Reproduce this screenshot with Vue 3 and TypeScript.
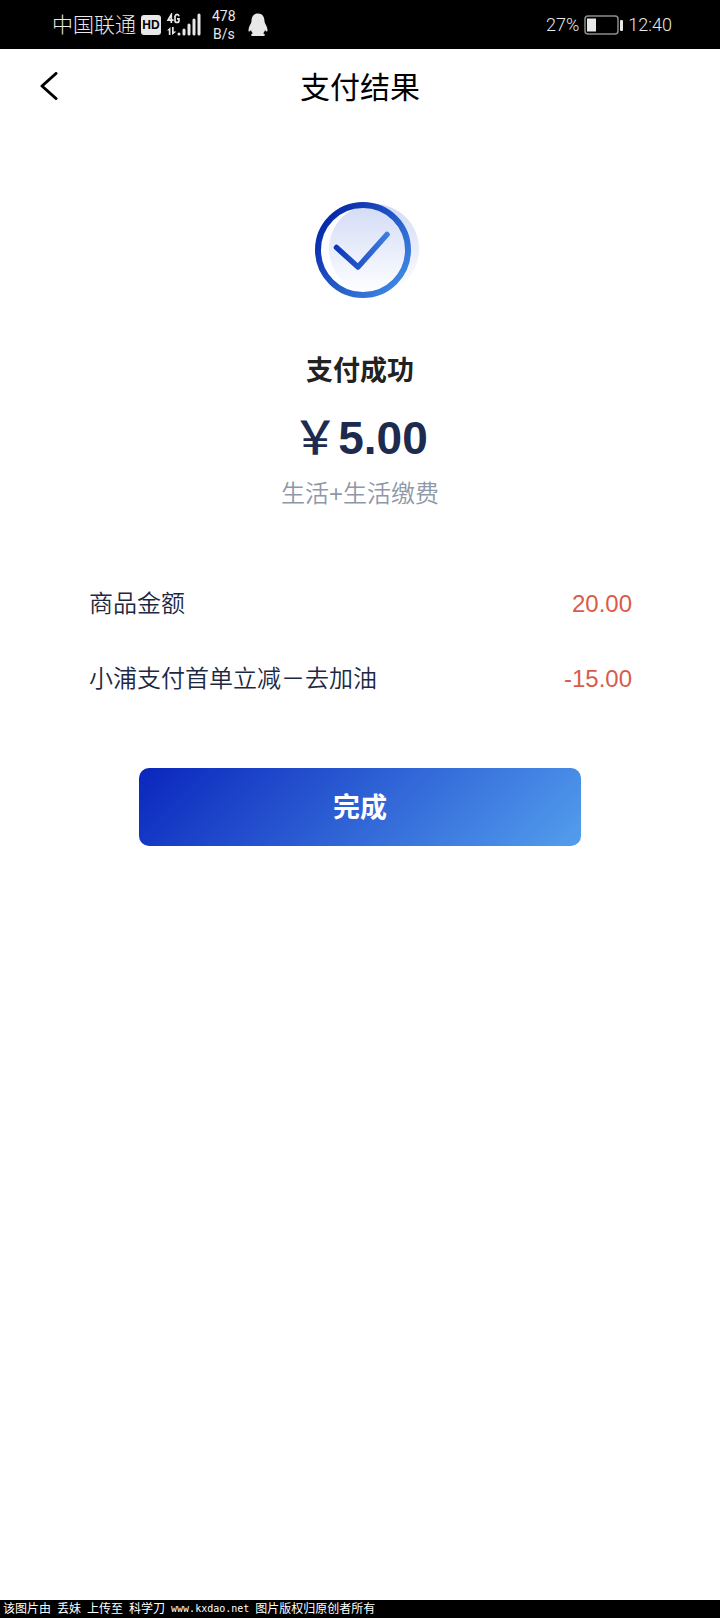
<script setup lang="ts">
interface PaymentLine {
  label: string
  value: string
}

const lines: PaymentLine[] = [
  { label: '商品金额', value: '20.00' },
  { label: '小浦支付首单立减－去加油', value: '-15.00' },
]
</script>

<template>
  <div class="screen">
    <div class="status">
      <div class="status-group">
        <span class="carrier">中国联通</span>
        <span class="hd">HD</span>
        <svg class="signal" width="34" height="24" viewBox="0 0 34 24" aria-hidden="true">
          <g fill="none" stroke="#e8e8e8" stroke-width="1.7">
            <path d="M4.3 10V1.5L1 7.2h5.6" />
            <path d="M12 3.2Q11.500 1.300 10 1.300T8 3.500v4Q8 9.500 10 9.500T12 7.500V5.800H10" />
          </g>
          <path d="M0 17.500l3.500-3.500v8H1.800v-4.500zM5 14h1.700v4.500H9.500L5 22z" fill="#e8e8e8" />
          <g stroke="#e8e8e8" stroke-width="3" stroke-linecap="round">
            <path d="M12 21v0M17 17v4M22 12v9M27 7V21M32 2v19" />
          </g>
        </svg>
        <span class="speed"><span>478</span><span>B/s</span></span>
        <svg class="penguin" width="20" height="24" viewBox="0 0 20 24" aria-hidden="true">
          <path
            d="M10 0.500C5.500 0.500 3.500 4 3.500 8.500C3.300 10.500 0.500 13.500 0.500 17C0.500 19 1.500 19 3 17C3.300 18.500 4 19.500 5 20.300C3 21 2.500 22.500 4 23H16C17.500 22.500 17 21 15 20.300C16 19.500 16.700 18.500 17 17C18.500 19 19.500 19 19.500 17C19.500 13.500 16.700 10.500 16.500 8.500C16.500 4 14.500 0.500 10 0.500Z"
            fill="#e8e8e8"
          />
        </svg>
      </div>
      <div class="status-group">
        <span class="battery-text">27%</span>
        <svg class="battery" width="39" height="20" viewBox="0 0 39 20" aria-hidden="true">
          <rect x="1" y="1" width="33" height="18" rx="3" fill="none" stroke="#8c8c8c" stroke-width="1.500" />
          <rect x="3" y="3.500" width="9" height="13" fill="#e8e8e8" />
          <rect x="36" y="5" width="3" height="11" rx="1" fill="#e8e8e8" />
        </svg>
        <span class="clock">12:40</span>
      </div>
    </div>

    <header class="header">
      <button class="back" type="button" aria-label="返回">
        <svg width="18" height="28" viewBox="0 0 18 28" aria-hidden="true">
          <path d="M16 1.500L2 14L16 26.500" fill="none" stroke="#000" stroke-width="3" stroke-linecap="round" stroke-linejoin="round" />
        </svg>
      </button>
      <h1 class="title">支付结果</h1>
    </header>

    <main class="content">
      <svg class="success-icon" width="118" height="98" viewBox="0 0 118 98" aria-hidden="true">
        <defs>
          <linearGradient id="ring" x1="15" y1="25" x2="92" y2="90" gradientUnits="userSpaceOnUse">
            <stop offset="0" stop-color="#0526a8" />
            <stop offset="1" stop-color="#3e86e2" />
          </linearGradient>
          <linearGradient id="tick" x1="34" y1="50" x2="88" y2="50" gradientUnits="userSpaceOnUse">
            <stop offset="0" stop-color="#0c35b5" />
            <stop offset="1" stop-color="#407fe2" />
          </linearGradient>
          <linearGradient id="disc" x1="0" y1="0" x2="0" y2="1">
            <stop offset="0" stop-color="#d2dbf6" />
            <stop offset="1" stop-color="#ffffff" />
          </linearGradient>
        </defs>
        <circle cx="73" cy="48" r="45" fill="url(#disc)" />
        <circle cx="62" cy="49" r="45" fill="none" stroke="url(#ring)" stroke-width="6" />
        <path d="M35.500 46.500L57 66L86 33.500" fill="none" stroke="url(#tick)" stroke-width="5.500" stroke-linecap="round" stroke-linejoin="round" />
      </svg>
      <h2 class="result">支付成功</h2>
      <p class="amount"><span class="currency">￥</span>5.00</p>
      <p class="merchant">生活+生活缴费</p>

      <dl class="lines">
        <div v-for="line in lines" :key="line.label" class="line">
          <dt>{{ line.label }}</dt>
          <dd>{{ line.value }}</dd>
        </div>
      </dl>

      <button class="done" type="button">完成</button>
    </main>

    <footer class="credit">
      <span>该图片由</span>
      <span>丢妹</span>
      <span>上传至</span>
      <span>科学刀</span>
      <span class="site">www.kxdao.net</span>
      <span>图片版权归原创者所有</span>
    </footer>
  </div>
</template>

<style>
body {
  margin: 0;
  background: #fff;
}
</style>

<style scoped>
.screen {
  display: flex;
  flex-direction: column;
  min-height: 100vh;
  background: #fff;
  font-family: "Liberation Sans", "Noto Sans CJK SC", sans-serif;
}

.status {
  display: flex;
  align-items: center;
  justify-content: space-between;
  height: 49px;
  padding: 0 48px 0 52px;
  background: #000;
  color: #e8e8e8;
}

.status-group {
  display: flex;
  align-items: center;
}

.carrier {
  font-size: 21px;
  font-weight: 300;
  line-height: 24px;
}

.hd {
  margin-left: 5px;
  width: 20px;
  border-radius: 3px;
  background: #e8e8e8;
  color: #000;
  font: bold 12px/20px "Liberation Sans", sans-serif;
  text-align: center;
}

.signal {
  margin-left: 6px;
}

.speed {
  display: flex;
  flex-direction: column;
  align-items: center;
  margin-left: 11px;
  font: 14px/18px Roboto, sans-serif;
}

.penguin {
  margin-left: 12px;
}

.battery-text,
.clock {
  font: 300 18px/24px Roboto, sans-serif;
}

.battery {
  margin: 0 5px;
}

.header {
  display: grid;
  grid-template-columns: 58px 1fr 58px;
  align-items: center;
  height: 74px;
}

.back {
  display: flex;
  justify-content: flex-end;
  padding: 0;
  border: 0;
  background: none;
}

.title {
  margin: 0;
  padding-top: 4px;
  font-size: 30px;
  font-weight: 400;
  line-height: 44px;
  text-align: center;
  color: #000;
}

.content {
  display: flex;
  flex: 1;
  flex-direction: column;
  align-items: center;
  padding: 78px 0 40px;
}

.result {
  margin: 52px 0 0;
  font-size: 27px;
  font-weight: 600;
  line-height: 40px;
  color: #222;
}

.amount {
  margin: 19px 0 0;
  font-size: 46px;
  font-weight: 700;
  line-height: 56px;
  color: #1d2b4f;
}

.currency {
  font-weight: 500;
}

.merchant {
  margin: 10px 0 0;
  font-size: 24px;
  font-weight: 350;
  line-height: 36px;
  color: #8f97a8;
}

.lines {
  box-sizing: border-box;
  display: flex;
  flex-direction: column;
  gap: 39px;
  width: 100%;
  margin: 74px 0 0;
  padding: 0 88px 0 89px;
}

.line {
  display: flex;
  justify-content: space-between;
  font-size: 24px;
  line-height: 36px;
}

.line dt {
  font-weight: 350;
  color: #1d2842;
}

.line dd {
  margin: 0;
  color: #d95c4b;
}

.done {
  width: calc(100% - 278px);
  height: 78px;
  margin-top: 71px;
  padding: 2px 0 0;
  border: 0;
  border-radius: 10px;
  background: linear-gradient(135deg, #0a26bd, #539eed);
  color: #fff;
  font-family: inherit;
  font-size: 27px;
  font-weight: 600;
  line-height: 40px;
}

.credit {
  display: flex;
  gap: 6px;
  height: 18px;
  padding-left: 3px;
  background: #000;
  color: #fff;
  font-size: 12px;
  line-height: 18px;
  white-space: nowrap;
}

.site {
  font-family: "DejaVu Sans Mono", monospace;
  font-size: 10px;
}
</style>
